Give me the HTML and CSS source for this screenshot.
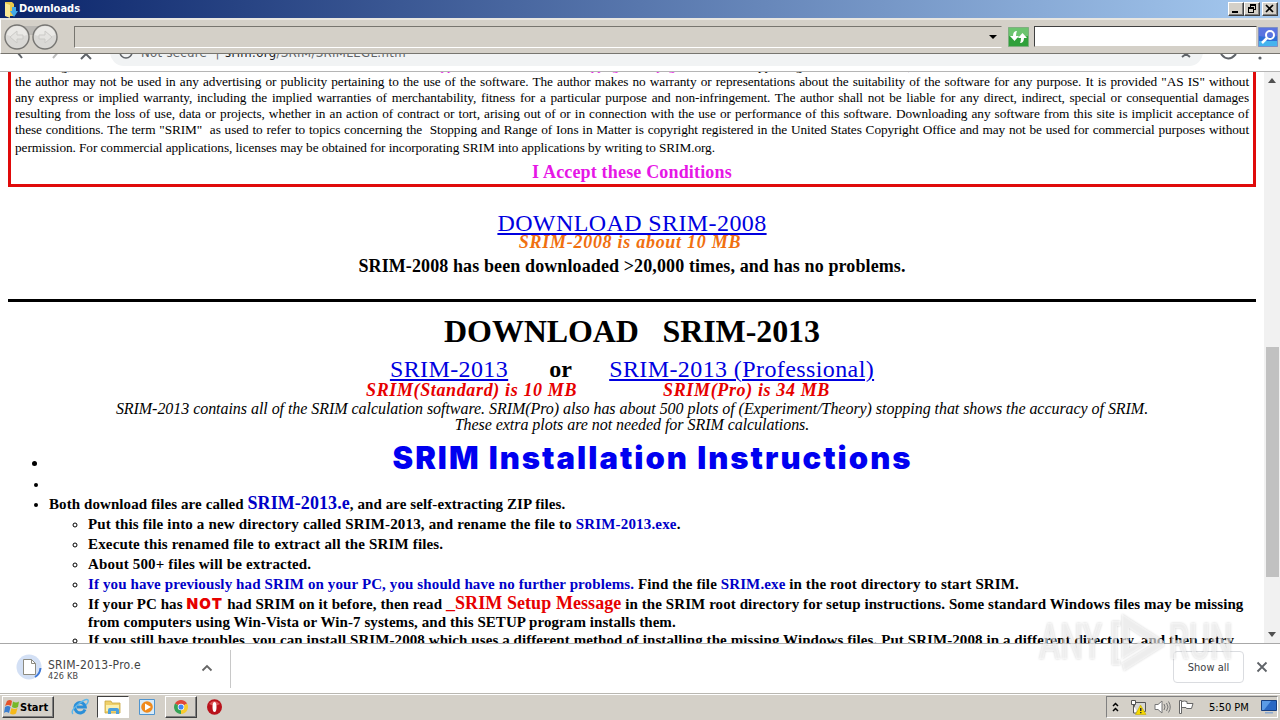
FILE: index.html
```html
<!DOCTYPE html>
<html lang="en">

<head>
    <meta charset="UTF-8">
    <title>Downloads</title>
    <link rel="stylesheet" href="styles.css">
</head>

<body>

    <!-- Explorer window -->
    <header class="titlebar">
        <svg class="title-icon" width="16" height="17" viewBox="0 0 16 17">
            <path d="M3 1h7l2 2v12H3z" fill="#e9c94c"/>
            <path d="M3 2l5 2v13l-5-2z" fill="#fbe995"/>
            <path d="M10 6h4v4h2l-4 6-4-6h2z" fill="#43a9e8"/>
        </svg>
        <h1>Downloads</h1>
        <div class="win-buttons">
            <button class="win-btn"><svg width="14" height="12"><path d="M3 8h6v2H3z"/></svg></button>
            <button class="win-btn"><svg width="14" height="12"><path d="M5 1h6v6H9V6h1V3H6v1H5zM3 4h6v6H3zM4 6v3h4V6z" fill-rule="evenodd"/></svg></button>
            <button class="win-btn close"><svg width="14" height="12"><path d="M3 2l7 7M10 2l-7 7" stroke="#000" stroke-width="1.7"/></svg></button>
        </div>
    </header>
    <div class="toolbar">
        <svg class="nav" width="56" height="28" viewBox="0 0 56 28">
            <path d="M14 3h28v9H14z" fill="#bab8b4"/>
            <g fill="#d9d8d5" stroke="#777673" stroke-width="1.4">
                <circle cx="14" cy="14" r="12"/>
                <circle cx="42" cy="14" r="12"/>
            </g>
            <path d="M4 12a10 9 0 0 1 20 0q-10 4-20 0M32 12a10 9 0 0 1 20 0q-10 4-20 0" fill="#eae9e6"/>
            <path d="M20 12v4h-6v4l-7-6 7-6v4zM36 12v4h6v4l7-6-7-6v4z" fill="#e4e3e0" stroke="#cbcac7"/>
        </svg>
        <div class="address"><i class="arrow-down"></i></div>
        <svg class="refresh" width="21" height="20" viewBox="0 0 21 20">
            <path d="M.5.5h20v19H.5z" fill="#2fa03a" stroke="#7fae80"/>
            <path d="M1 1h19v8Q10 12 1 9z" fill="#6cc46f"/>
            <path d="M9 4Q5 4 5 9H2l4.500 5L11 9H8q0-3 1-5zM12 16q4 0 4-5h3l-4.500-5L10 11h3q0 3-1 5z" fill="#fff"/>
        </svg>
        <div class="search"></div>
        <svg class="search-btn" width="20" height="20" viewBox="0 0 20 20">
            <path d="M.5.5h19v19H.5z" fill="#2d6fd6" stroke="#7d8fc4"/>
            <path d="M1 1h18v8Q10 11 1 9z" fill="#5a74e0"/>
            <path d="M1 14h18v5H1z" fill="#45b3ee"/>
            <circle cx="12" cy="8" r="4" fill="none" stroke="#fff" stroke-width="2"/>
            <path d="M9 11l-5 5" stroke="#fff" stroke-width="2.500"/>
        </svg>
    </div>

    <!-- Browser bar, partly hidden under the window above -->
    <div class="browser-bar">
        <svg class="bar-nav" width="110" height="18" viewBox="0 0 110 18" fill="none" stroke="#5f6368" stroke-width="2">
            <path d="M14-6l8 10"/>
            <path d="M60-4l-7 8" stroke="#bbb"/>
            <path d="M81 5l5-5 5 5"/>
        </svg>
        <div class="omnibox">
            <svg width="16" height="16" viewBox="0 0 16 16" fill="none" stroke="#5f6368" stroke-width="1.6"><circle cx="8" cy="7" r="6"/></svg>
            <span class="secure">Not secure</span><span class="sep">|</span><span class="url">srim.org<em>/SRIM/SRIMLEGL.htm</em></span>
            <svg class="star" width="14" height="14" viewBox="0 0 14 14" fill="none" stroke="#5f6368" stroke-width="2"><path d="M3 12l4-3 4 3"/></svg>
        </div>
        <svg class="bar-menu" width="60" height="18" viewBox="0 0 60 18"><path d="M6 0q7 9 15 0" fill="none" stroke="#5f6368" stroke-width="2"/><circle cx="45" cy="4" r="1.600" fill="#5f6368"/></svg>
    </div>

    <div class="viewport">
        <main class="page">
            <section class="terms">
                <p class="fill">SRIM.org, and that the name of <span class="magenta">the author appear in the copyright page</span> in supporting documentation, and that the name of SRIM and</p>
                <p class="fill">the author may not be used in any advertising or publicity pertaining to the use of the software. The author makes no warranty or representations about the suitability of the software for any purpose. It is provided "AS IS" without</p>
                <p class="fill">any express or implied warranty, including the implied warranties of merchantability, fitness for a particular purpose and non-infringement. The author shall not be liable for any direct, indirect, special or consequential damages</p>
                <p class="fill">resulting from the loss of use, data or projects, whether in an action of contract or tort, arising out of or in connection with the use or performance of this software. Downloading any software from this site is implicit acceptance of</p>
                <p class="fill">these conditions. The term "SRIM"&nbsp; as used to refer to topics concerning the&nbsp; Stopping and Range of Ions in Matter is copyright registered in the United States Copyright Office and may not be used for commercial purposes without</p>
                <p class="end">permission. For commercial applications, licenses may be obtained for incorporating SRIM into applications by writing to SRIM.org.</p>
                <h3 class="accept">I Accept these Conditions</h3>
            </section>

            <section class="old-version">
                <a class="link" href="#">DOWNLOAD SRIM-2008</a>
                <p class="size orange">SRIM-2008 is about 10 MB</p>
                <p class="count">SRIM-2008 has been downloaded &gt;20,000 times, and has no problems.</p>
            </section>

            <section class="new-version">
                <h2>DOWNLOAD &nbsp; SRIM-2013</h2>
                <div class="choices"><a class="link" href="#">SRIM-2013</a><b>or</b><a class="link" href="#">SRIM-2013 (Professional)</a></div>
                <div class="sizes"><span class="size">SRIM(Standard) is 10 MB</span><span class="size">SRIM(Pro) is 34 MB</span></div>
                <p class="note first">SRIM-2013 contains all of the SRIM calculation software. SRIM(Pro) also has about 500 plots of (Experiment/Theory) stopping that shows the accuracy of SRIM.</p>
                <p class="note">These extra plots are not needed for SRIM calculations.</p>
            </section>

            <ul class="steps">
                <li class="install-title">SRIM Installation Instructions</li>
                <li></li>
                <li>Both download files are called <span class="blue big">SRIM-2013.e</span>, and are self-extracting ZIP files.
                    <ul>
                        <li class="wide">Put this file into a new directory called SRIM-2013, and rename the file to <span class="blue">SRIM-2013.exe</span>.</li>
                        <li class="wide">Execute this renamed file to extract all the SRIM files.</li>
                        <li class="wide">About 500+ files will be extracted.</li>
                        <li class="medium"><span class="blue">If you have previously had SRIM on your PC, you should have no further problems.</span> Find the file <span class="blue">SRIM.exe</span> in the root directory to start SRIM.</li>
                        <li>If your PC has <span class="not">NOT</span> had SRIM on it before, then read <span class="red big">_SRIM Setup Message</span> in the SRIM root directory for setup instructions. Some standard Windows files may be missing
                            <div class="wrapped">from computers using Win-Vista or Win-7 systems, and this SETUP program installs them.</div></li>
                        <li>If you still have troubles, you can install SRIM-2008 which uses a different method of installing the missing Windows files. Put SRIM-2008 in a different directory, and then retry</li>
                    </ul>
                </li>
            </ul>
        </main>
        <div class="scrollbar"><i class="arrow-up"></i><div class="thumb"></div><i class="arrow-down"></i></div>
    </div>

    <!-- Download shelf -->
    <div class="shelf">
        <div class="download">
            <svg width="28" height="28" viewBox="0 0 28 28">
                <circle cx="14" cy="13" r="12.500" fill="#d3e0f5"/>
                <path d="M8.500 5.500h8l4 4v11h-12z" fill="#fff" stroke="#8d8b80"/>
                <path d="M16.500 5.500v4h4" fill="none" stroke="#8d8b80"/>
                <path d="M25.500 14q-.5 6-5.500 9" fill="none" stroke="#3f79d8" stroke-width="2"/>
            </svg>
            <div class="file"><span>SRIM-2013-Pro.e</span><small>426 KB</small></div>
            <svg class="chevron" width="12" height="8" viewBox="0 0 12 8"><path d="M1.500 6.500L6 2l4.500 4.500" fill="none" stroke="#666" stroke-width="1.800"/></svg>
        </div>
        <button class="show-all">Show all</button>
        <svg class="dismiss" width="12" height="12" viewBox="0 0 12 12"><path d="M1.500 1.500l9 9M10.500 1.500l-9 9" stroke="#5f6368" stroke-width="1.800"/></svg>
    </div>

    <footer class="taskbar">
        <button class="start">
            <svg width="16" height="16" viewBox="0 0 16 16">
                <path d="M3 2q3-2 5 0L7 7Q4 5 1 7z" fill="#e5532b"/>
                <path d="M9 2.500q3 2 6 0L14 8q-3 2-6 0z" fill="#76b82a"/>
                <path d="M1 8q3-2 5.500 0L5 14q-3-2-5 0z" fill="#3c7fd0"/>
                <path d="M7.500 9q3 2 6 0L12 14.500q-3 2-6 0z" fill="#f5b919"/>
            </svg>Start</button>
        <div class="task ie">
            <svg width="18" height="18" viewBox="0 0 18 18">
                <path d="M14 11.500A5.200 5.200 0 1 1 14.300 9H6" fill="none" stroke="#2b8fd8" stroke-width="3"/>
                <path d="M2 16q-3-3 5-9.500T17 2q1 2-2 5" fill="none" stroke="#5db7ec" stroke-width="1.400"/>
            </svg>
        </div>
        <div class="task pressed">
            <svg width="18" height="16" viewBox="0 0 18 16">
                <path d="M1 2h6l1 2h8v10H1z" fill="#efd06a" stroke="#c9a63c" stroke-width=".8"/>
                <path d="M2 6h13v6H2z" fill="#fbf0ae"/>
                <path d="M4 15v-4q0-2 2-2h7q2 0 2 2v4h-3v-3H7v3z" fill="#4ba0dd"/>
            </svg>
        </div>
        <div class="task player">
            <svg width="16" height="16" viewBox="0 0 16 16">
                <path d="M.5.5h15v15H.5z" fill="#d8ebf9" stroke="#4f94cf"/>
                <circle cx="8" cy="8" r="5.800" fill="#f08a1c"/>
                <path d="M6 4.500l6 3.500-6 3.500z" fill="#fff"/>
            </svg>
        </div>
        <div class="task raised">
            <svg width="14" height="14" viewBox="0 0 16 16">
                <path d="M8 8L1.100 4A8 8 0 0 1 14.900 4z" fill="#e0473a"/>
                <path d="M8 8l6.900-4A8 8 0 0 1 8 16z" fill="#f8cb2e"/>
                <path d="M8 8v8A8 8 0 0 1 1.100 4z" fill="#35a355"/>
                <circle cx="8" cy="8" r="3.700" fill="#fff"/>
                <circle cx="8" cy="8" r="2.900" fill="#4285f4"/>
            </svg>
        </div>
        <div class="task opera">
            <svg width="15" height="16" viewBox="0 0 15 16">
                <ellipse cx="7.500" cy="8" rx="7.500" ry="7.700" fill="#b9121b"/>
                <path d="M2 5q5-6 11 0-5 3-11 0" fill="#dc5458"/>
                <ellipse cx="7.500" cy="8" rx="2" ry="5" fill="#fff"/>
            </svg>
        </div>
        <div class="tray">
            <svg width="8" height="10" viewBox="0 0 8 10" fill="none" stroke="#000" stroke-width="1.500"><path d="M1 4l2.500-2.500L6 4M1 9l2.500-2.500L6 9"/></svg>
            <svg class="net" width="17" height="16" viewBox="0 0 17 16">
                <path d="M4.500 3.500h11v9h-11z" fill="#d7d7d3" stroke="#555"/>
                <path d="M1.500 1.500h4v4h-4zM3.500 6v8h4" fill="#fff" stroke="#555"/>
                <path d="M10.500 6l5.500 9.500H5.500z" fill="#f5d800" stroke="#c5a900" stroke-width=".6"/>
                <path d="M10 9h1.500v3H10zM10 13h1.500v1.300H10z" fill="#333"/>
            </svg>
            <svg class="sound" width="17" height="16" viewBox="0 0 17 16" fill="none" stroke="#777">
                <path d="M1 5.500h3L8 2v12l-4-3.500H1z" fill="#fff"/>
                <path d="M10 5q2 3 0 6M12.500 4q3 4 0 8M14.500 2.500q3.500 5.500 0 11"/>
            </svg>
            <svg class="flag" width="17" height="16" viewBox="0 0 17 16" fill="#fff" stroke="#666"><path d="M1.500 1.500h2v13h-2zM3.500 2.500q3-1 5.500 0v2h6l-1.500 5H8.500l-.5-1H3.500z"/></svg>
            <span class="clock">5:50 PM</span>
            <svg class="desktop" width="16" height="14" viewBox="0 0 16 14"><path d="M.5.5h15v10H.5z" fill="#2a68c4" stroke="#173f80"/><path d="M1 1h9L3 10H1z" fill="#5b9be6"/><path d="M4 12h8v1.500H4z" fill="#8aa9d0"/></svg>
        </div>
    </footer>

    <div class="watermark">
        <span>ANY</span>
        <svg width="58" height="62" viewBox="0 0 58 62">
            <path d="M4 10h8v5H9v34h3v5H4z"/>
            <path d="M14 3l42 27v5L16 60l-2-8 31-19-24-16v20l11-6 5 3-23 14z"/>
        </svg>
        <span>RUN</span>
    </div>

</body>

</html>
```

FILE: styles.css
```css
* {
    box-sizing: border-box;
}

body {
    margin: 0;
    width: 1280px;
    height: 720px;
    overflow: hidden;
    display: flex;
    flex-direction: column;
    background: #fff;
    font-family: "DejaVu Sans Condensed", "DejaVu Sans", sans-serif;
    font-size: 11px;
    color: #000;
}

h1, h2, h3, p, ul {
    margin: 0;
    padding: 0;
}

button {
    font: inherit;
    padding: 0;
    color: #000;
}

svg {
    display: block;
    flex: none;
}

/* Title bar and toolbar */
.titlebar {
    flex: none;
    height: 18px;
    display: flex;
    align-items: center;
    background: linear-gradient(to right, #0a246a, #a6caf0);
    color: #fff;
    padding: 0 2px;
}

.titlebar h1 {
    font-size: 11px;
    margin: -1px 0 0 1px;
    flex: 1;
}

.win-buttons {
    display: flex;
}

.win-btn, .start, .raised {
    background: #d4d0c8;
    border: 1px solid;
    border-color: #fff #404040 #404040 #fff;
    box-shadow: inset -1px -1px #808080;
}

.win-btn {
    width: 16px;
    height: 14px;
}

.win-btn.close {
    margin-left: 2px;
}

.toolbar {
    flex: none;
    height: 36px;
    display: flex;
    align-items: center;
    background: #d4d0c8;
    border-top: 2px solid #e8e6e1;
    border-bottom: 1px solid #77756f;
    border-left: 1px solid #fff;
    padding: 0 2px;
}

.nav {
    margin-right: 15px;
}

.address {
    width: 928px;
    height: 22px;
    border: 1px solid;
    border-color: #77756f #d4d0c8 #fff #77756f;
    display: flex;
    justify-content: flex-end;
    align-items: center;
    padding-right: 4px;
}

.arrow-down, .arrow-up {
    border: 4px solid transparent;
    border-bottom-width: 0;
    border-top-color: #000;
}

.refresh {
    margin-left: 6px;
}

.search {
    flex: 1;
    height: 21px;
    margin: 0 1px 0 5px;
    background: #fff;
    border: 1px solid;
    border-color: #404040 #d4d0c8 #d4d0c8 #404040;
}

/* Browser bar */
.browser-bar {
    flex: none;
    height: 18px;
    display: flex;
    overflow: hidden;
    border-bottom: 1px solid #b5b5b5;
    font-size: 13px;
    color: #5f6368;
}

.omnibox {
    width: 1093px;
    height: 28px;
    margin-top: -16px;
    border-radius: 14px;
    background: #f1f3f4;
    display: flex;
    padding: 7px 10px 0 8px;
    line-height: 16px;
}

.secure {
    margin-left: 7px;
    width: 69px;
    letter-spacing: .3px;
}

.sep {
    width: 15px;
    text-align: center;
}

.url {
    color: #202124;
    flex: 1;
    letter-spacing: .38px;
}

.url em {
    font-style: normal;
    color: #5f6368;
}

.bar-menu {
    margin-left: 12px;
}

/* Page */
.viewport {
    flex: none;
    height: 571px;
    display: flex;
    overflow: hidden;
}

.page {
    width: 1264px;
    padding: 0 8px;
    font-family: "Liberation Serif", "Times New Roman", serif;
    white-space: nowrap;
}

.terms {
    height: 129px;
    margin-top: -14px;
    border: 3px solid #e00a0a;
    border-top: 0;
    padding: 0 4px;
    font-size: 13.3px;
    line-height: 16px;
    letter-spacing: -.08px;
}

.terms p {
    height: 16px;
}

.terms .fill {
    text-align-last: justify;
    white-space: normal;
}

.terms .end {
    margin-top: 2px;
}

.magenta, .accept {
    color: #e616e6;
}

.accept {
    text-align: center;
    font-size: 18px;
    line-height: 20px;
    letter-spacing: .17px;
    margin-top: 6px;
}

.link {
    color: #0000e0;
    font-size: 24px;
    letter-spacing: .4px;
    text-decoration-thickness: 2px;
    text-underline-offset: 2px;
}

.old-version {
    text-align: center;
    height: 115px;
    padding-top: 22px;
    border-bottom: 3px solid #000;
}

.old-version .link {
    display: block;
    line-height: 28px;
}

.size {
    font-size: 18px;
    line-height: 16px;
    font-weight: bold;
    font-style: italic;
    letter-spacing: .63px;
    color: #e60000;
}

.size.orange {
    color: #f07010;
    letter-spacing: .72px;
    margin: -3px 4px 0 0;
}

.count {
    font-size: 18px;
    font-weight: bold;
    line-height: 20px;
    letter-spacing: .11px;
    margin-top: 6px;
}

.new-version {
    text-align: center;
    height: 133px;
    padding-top: 11px;
}

.new-version h2 {
    font-size: 32px;
    line-height: 36px;
    letter-spacing: -.1px;
}

.choices {
    display: flex;
    justify-content: center;
    font-size: 24px;
    line-height: 28px;
    margin-top: 6px;
}

.choices b {
    width: 101px;
    padding-left: 4px;
}

.sizes {
    display: flex;
    justify-content: center;
    gap: 86px;
    margin: -1px 68px 0 0;
}

.note {
    font-size: 16px;
    font-style: italic;
    line-height: 16px;
    letter-spacing: -.047px;
}

.note.first {
    margin-top: 3px;
}

.steps {
    font-size: 15px;
    font-weight: bold;
    line-height: 20px;
    letter-spacing: .08px;
    padding-left: 41px;
    margin-top: 13px;
}

.steps ul {
    padding-left: 39px;
}

.steps li {
    min-height: 20px;
}

.steps .wide {
    letter-spacing: .16px;
}

.steps .medium {
    letter-spacing: .11px;
}

.steps .install-title {
    text-align: center;
    font-family: Inter, sans-serif;
    font-weight: 900;
    font-size: 31px;
    letter-spacing: 2px;
    min-height: 26px;
    color: #0000f0;
}

.install-title::marker {
    font-size: 15px;
    color: #000;
}

.big {
    font-size: 18px;
    line-height: 18px;
}

.blue {
    color: #0000c8;
}

.red, .not {
    color: #e60000;
}

.not {
    font-family: Inter, sans-serif;
    font-weight: 900;
    letter-spacing: 1.3px;
}

.wrapped {
    line-height: 16px;
    letter-spacing: .07px;
}

.scrollbar {
    width: 16px;
    background: #f1f1f1;
    display: flex;
    flex-direction: column;
    align-items: center;
    padding: 6px 0;
}

.scrollbar .arrow-up {
    border-width: 0 4px 5px;
    border-bottom-color: #505050;
}

.scrollbar .arrow-down {
    border-width: 5px 4px 0;
    border-top-color: #505050;
    margin-top: auto;
}

.thumb {
    width: 13px;
    height: 230px;
    margin-top: 264px;
    background: #c1c1c1;
}

/* Download shelf */
.shelf {
    flex: none;
    height: 50px;
    border-top: 1px solid #a8a8a8;
    display: flex;
    align-items: center;
    padding-right: 12px;
}

.download {
    width: 231px;
    height: 38px;
    border-right: 1px solid #c8c8c8;
    display: flex;
    align-items: center;
    padding-left: 15px;
    margin-right: auto;
}

.download svg {
    margin-top: -2px;
}

.file {
    width: 148px;
    margin: 2px 5px 0;
    display: flex;
    flex-direction: column;
    color: #444;
    font-size: 12px;
    line-height: 12px;
    letter-spacing: .25px;
}

.file small {
    font-size: 9px;
    line-height: 10px;
}

.show-all {
    width: 71px;
    height: 32px;
    margin: -3px 12px 0 0;
    border: 1px solid #dadce0;
    border-radius: 4px;
    background: #fff;
    color: #3c4043;
    font-size: 11px;
}

.dismiss {
    margin-top: -3px;
}

/* Taskbar */
.taskbar {
    flex: none;
    height: 27px;
    display: flex;
    align-items: center;
    background: #d4d0c8;
    border-top: 1px solid #b9b7b1;
    box-shadow: inset 0 1px #fff;
    padding: 0 2px;
}

.start {
    width: 52px;
    height: 22px;
    display: flex;
    align-items: center;
    padding-left: 1px;
    font-size: 11px;
    font-weight: bold;
}

.task {
    width: 32px;
    height: 22px;
    display: flex;
    align-items: center;
    justify-content: center;
}

.ie {
    margin-left: 10px;
}

.pressed {
    background: #fff;
    border: 1px solid;
    border-color: #404040 #fff #fff #404040;
    margin-left: 1px;
}

.player {
    margin: 0 2px 0 2px;
}

.opera {
    margin-left: 1px;
}

.tray {
    margin-left: auto;
    width: 172px;
    height: 22px;
    border: 1px solid;
    border-color: #808080 #fff #fff #808080;
    display: flex;
    align-items: center;
    padding-left: 5px;
}

.net {
    margin-left: 10px;
}

.sound, .flag {
    margin-left: 7px;
}

.clock {
    margin-left: 14px;
    width: 53px;
    white-space: nowrap;
}

/* Stamp over the lower right corner */
.watermark {
    position: absolute;
    left: 1039px;
    top: 611px;
    display: flex;
    align-items: center;
    gap: 3px;
    font: 500 50px/62px Roboto, sans-serif;
    color: rgba(255, 255, 255, .6);
    filter: drop-shadow(0 0 1px rgba(0, 0, 0, .3));
}

.watermark span {
    width: 66px;
    transform: scaleX(.64);
    transform-origin: left;
}

.watermark path {
    fill: rgba(255, 255, 255, .6);
}
```
